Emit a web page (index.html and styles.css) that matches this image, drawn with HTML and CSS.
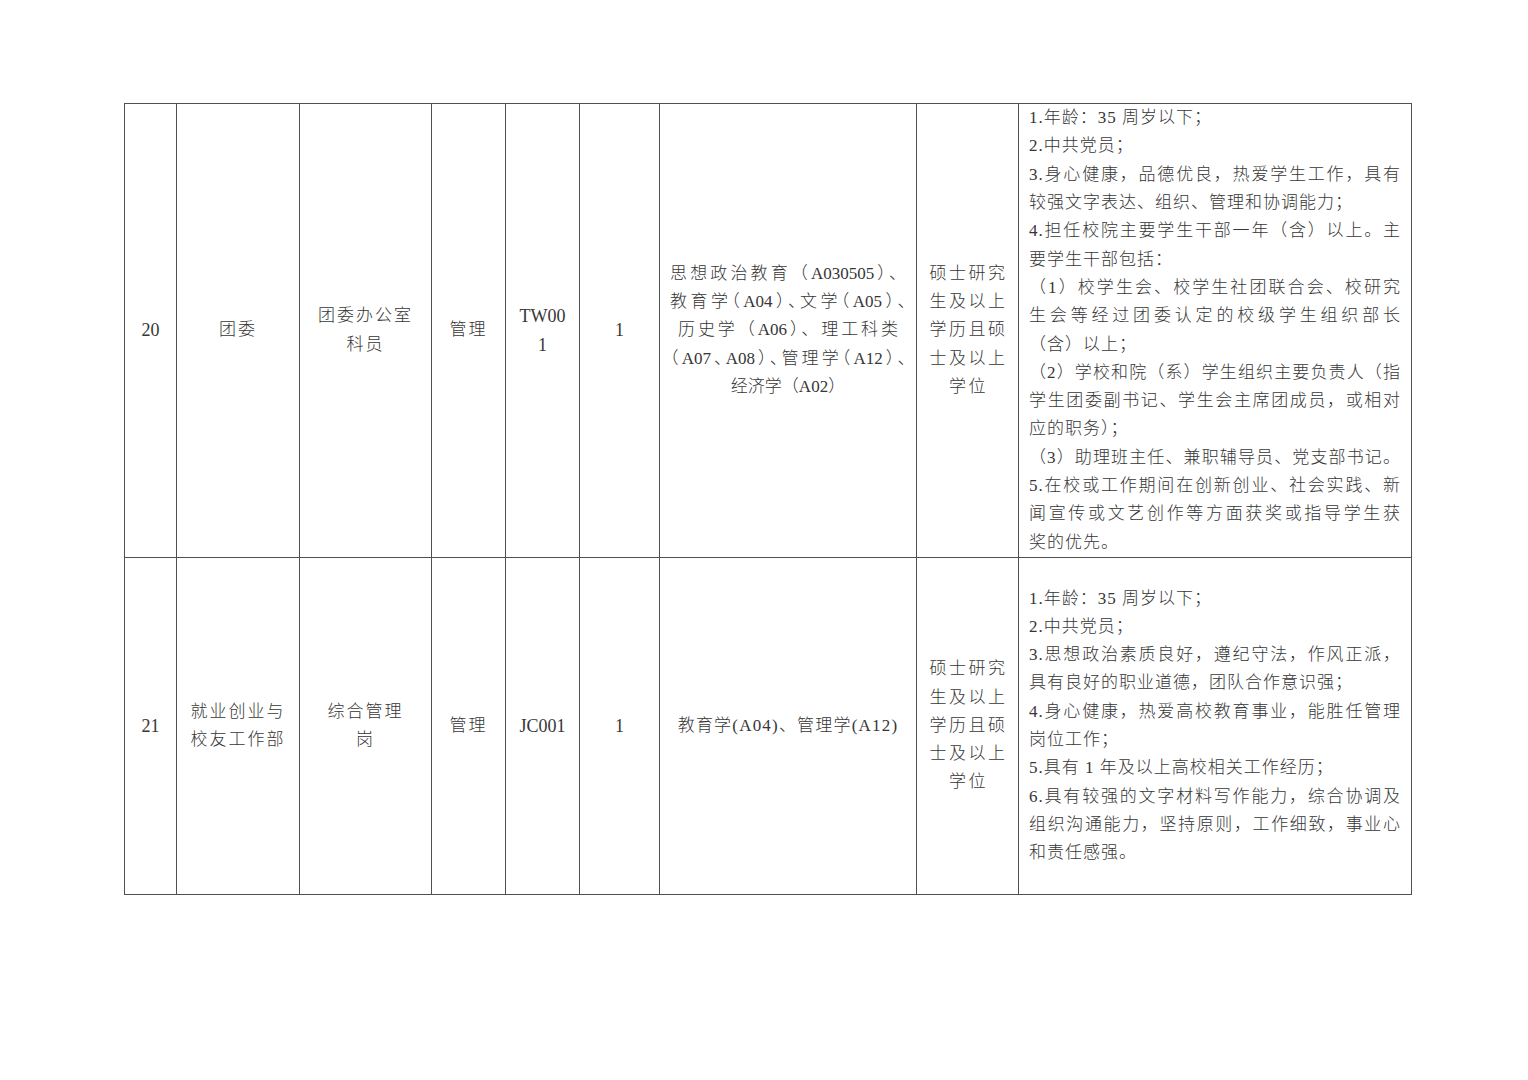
FILE: index.html
```html
<!DOCTYPE html>
<html lang="zh-CN">
<head>
<meta charset="utf-8">
<title>岗位表</title>
<link rel="stylesheet" href="styles.css">
</head>
<body>
<div class="page">
<table class="tbl">
<colgroup>
<col class="c1"><col class="c2"><col class="c3"><col class="c4"><col class="c5"><col class="c6"><col class="c7"><col class="c8"><col class="c9">
</colgroup>
<tbody>
<tr class="r1">
<td class="num">20</td>
<td class="sp">团委</td>
<td class="sp">团委办公室<br>科员</td>
<td class="sp">管理</td>
<td class="num">TW00<br>1</td>
<td class="num">1</td>
<td class="major">
<div class="ln j">思想政治教育（A030505）、</div>
<div class="ln j tight">教育学（A04）、文学（A05）、</div>
<div class="ln j inset">历史学（A06）、理工科类</div>
<div class="ln j tight">（A07、A08）、管理学（A12）、</div>
<div class="ln">经济学（A02）</div>
</td>
<td class="deg">硕士研究<br>生及以上<br>学历且硕<br>士及以上<br>学位</td>
<td class="req">
<div class="ln">1.年龄：35 周岁以下；</div>
<div class="ln">2.中共党员；</div>
<div class="ln j">3.身心健康，品德优良，热爱学生工作，具有</div>
<div class="ln">较强文字表达、组织、管理和协调能力；</div>
<div class="ln j">4.担任校院主要学生干部一年（含）以上。主</div>
<div class="ln">要学生干部包括：</div>
<div class="ln j">（1）校学生会、校学生社团联合会、校研究</div>
<div class="ln j">生会等经过团委认定的校级学生组织部长</div>
<div class="ln">（含）以上；</div>
<div class="ln j">（2）学校和院（系）学生组织主要负责人（指</div>
<div class="ln j">学生团委副书记、学生会主席团成员，或相对</div>
<div class="ln">应的职务）；</div>
<div class="ln j">（3）助理班主任、兼职辅导员、党支部书记。</div>
<div class="ln j">5.在校或工作期间在创新创业、社会实践、新</div>
<div class="ln j">闻宣传或文艺创作等方面获奖或指导学生获</div>
<div class="ln">奖的优先。</div>
</td>
</tr>
<tr class="r2">
<td class="num">21</td>
<td class="sp">就业创业与<br>校友工作部</td>
<td class="sp">综合管理<br>岗</td>
<td class="sp">管理</td>
<td class="num">JC001</td>
<td class="num">1</td>
<td class="major"><div class="ln wide">教育学(A04)、管理学(A12)</div></td>
<td class="deg">硕士研究<br>生及以上<br>学历且硕<br>士及以上<br>学位</td>
<td class="req">
<div class="ln">1.年龄：35 周岁以下；</div>
<div class="ln">2.中共党员；</div>
<div class="ln j">3.思想政治素质良好，遵纪守法，作风正派，</div>
<div class="ln">具有良好的职业道德，团队合作意识强；</div>
<div class="ln j">4.身心健康，热爱高校教育事业，能胜任管理</div>
<div class="ln">岗位工作；</div>
<div class="ln">5.具有 1 年及以上高校相关工作经历；</div>
<div class="ln j">6.具有较强的文字材料写作能力，综合协调及</div>
<div class="ln j">组织沟通能力，坚持原则，工作细致，事业心</div>
<div class="ln">和责任感强。</div>
</td>
</tr>
</tbody>
</table>
</div>
</body>
</html>
```

FILE: styles.css
```css
html, body {
  margin: 0;
  padding: 0;
  background: #ffffff;
}
.page {
  padding: 103px 0 0 124px;
}
.tbl {
  border-collapse: collapse;
  table-layout: fixed;
  width: 1288px;
  font-family: "Liberation Serif", "Noto Sans CJK SC", serif;
  font-size: 17px;
  line-height: 28.3px;
  color: #363636;
}
.tbl td {
  border: 1px solid #505050;
  padding: 0;
  text-align: center;
  vertical-align: middle;
}
.c1 { width: 52px; }
.c2 { width: 123px; }
.c3 { width: 132px; }
.c4 { width: 74px; }
.c5 { width: 74px; }
.c6 { width: 80px; }
.c7 { width: 257px; }
.c8 { width: 102px; }
.c9 { width: 393px; }
.r1 { height: 454px; }
.r2 { height: 337px; }
.sp {
  letter-spacing: 2px;
  font-weight: 300;
}
.num {
  font-size: 18px;
}
.major {
  padding: 0 10px !important;
  font-weight: 300;
}
.major .ln.inset {
  padding: 0 8px;
}
.major .ln.tight {
  font-feature-settings: "halt";
}
.major .ln.wide {
  letter-spacing: 1.2px;
}
.deg {
  letter-spacing: 2.5px;
  font-weight: 300;
  padding-left: 2px !important;
}
.req {
  text-align: left !important;
  padding: 0 10px 0 10px !important;
  letter-spacing: 1px;
  font-weight: 300;
}
.ln {
  white-space: nowrap;
}
.req .ln {
  text-align: left;
}
.ln.j {
  text-align: justify;
  text-align-last: justify;
}
```
